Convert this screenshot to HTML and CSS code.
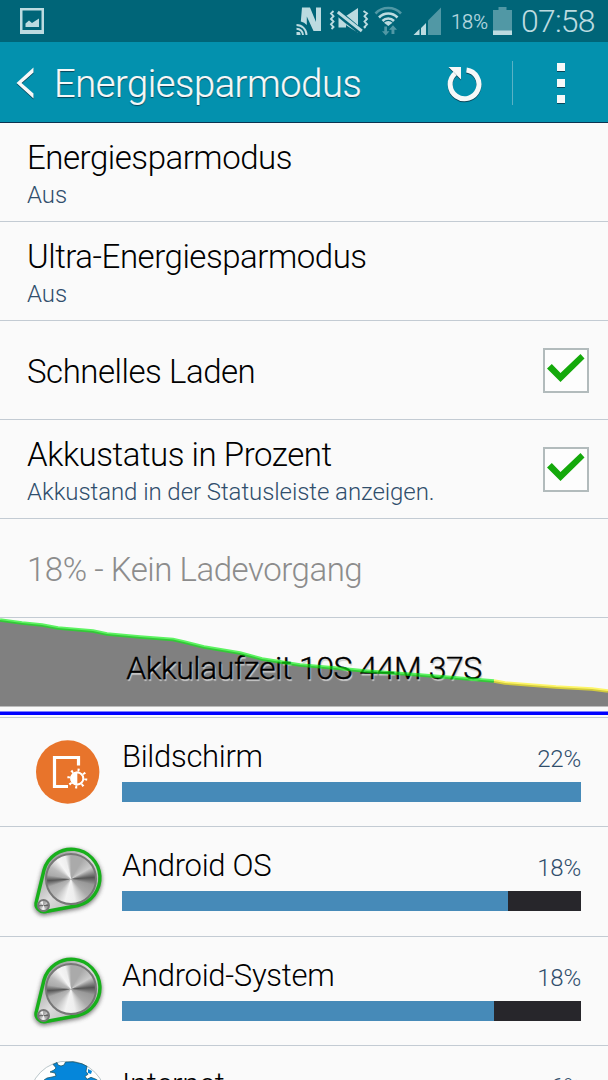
FILE: index.html
```html
<!DOCTYPE html>
<html lang="de">
<head>
<meta charset="utf-8">
<title>Energiesparmodus</title>
<link rel="stylesheet" href="styles.css">
</head>
<body>
<svg class="defs" width="0" height="0" aria-hidden="true">
  <defs>
    <linearGradient id="rim" x1="0" y1="0" x2="1" y2="1"><stop offset="0" stop-color="#777"/><stop offset=".5" stop-color="#ddd"/><stop offset="1" stop-color="#999"/></linearGradient>
    <filter id="soft" x="-20%" y="-20%" width="140%" height="140%"><feGaussianBlur stdDeviation="2"/></filter>
    <symbol id="gear" viewBox="0 0 80 80">
      <path d="M8.500 59L16 28A28.500 28.500 0 1 1 50 63.500L18 69.500A8 8 0 0 1 8.500 59z" fill="#444" stroke="#444" stroke-width="4" opacity=".7" filter="url(#soft)" transform="translate(0 1.500)"/>
      <path d="M8.500 59L16 28A28.500 28.500 0 1 1 50 63.500L18 69.500A8 8 0 0 1 8.500 59z" fill="url(#rim)" stroke="#17b01b" stroke-width="3.400"/>
    </symbol>
  </defs>
</svg>
<div class="screen">
  <header class="status">
    <svg class="shot" width="24" height="26" viewBox="0 0 24 26"><path d="M1.250 1.250H22.750V24H1.250Z" fill="none" stroke="#bcdbe0" stroke-width="2.500"/><path d="M0 22h24v4H0zM5.500 19v-3.500L9 12.500l3 2.500 7-4.500V19z" fill="#bcdbe0"/></svg>
    <svg class="tray" width="156" height="30" viewBox="296 6 156 30">
      <g fill="#bcdbe0">
        <path d="M302 7.500h8l6 14.500V7.500h5V31h-7.500L306.800 16.500V25a12 12 0 0 0-6-3.500z"/>
        <path d="M296.500 32h3a3 3 0 0 1 1 2.500v.5h-4z"/>
        <path d="M338.500 17h7.500v10.500h-7.500zM346 16l12-8v21z"/>
        <path d="M413.500 35l6-6v6zM421 28l5-5v12h-5z"/>
      </g>
      <g fill="none" stroke="#bcdbe0" stroke-width="1.900">
        <path d="M296.500 28.700a6.500 6.500 0 0 1 6.500 6.300M296.500 25a10 10 0 0 1 10 10"/>
        <path d="M333.500 11l-2.500 2.500 2.500 2.700-2.500 2.700 2.500 2.700-2.500 2.700 2.500 2.700-2 2M363.500 11l3.500 2.500-2.500 2.700 2.500 2.700-2.500 2.700 2.500 2.700-2.500 2.700 1 1"/>
      </g>
      <path d="M336.500 11.500l25 21" stroke="#006578" stroke-width="6.500"/>
      <path d="M337.800 12l24 19" stroke="#bcdbe0" stroke-width="3"/>
      <path d="M346.500 25.500L346 23.500l12 9.500v-.2z" fill="#bcdbe0"/>
      <g fill="none" stroke-width="2.600">
        <path d="M375.500 13.500a17.500 17.500 0 0 1 25.500 0" stroke="#5198a5"/>
        <path d="M379 17.500a12.800 12.800 0 0 1 18.500 0M382.500 21a8 8 0 0 1 11.500 0" stroke="#bcdbe0"/>
      </g>
      <path d="M384 22.700a6 6 0 0 1 8.500 0l-4.200 3.300z" fill="#bcdbe0"/>
      <path d="M384.300 26.500h2.700v4.700h2.500L385.700 35.500 382 31.200h2.300zM391.500 34v-4.200H389l4-4.600 4 4.600h-2.600V34z" fill="#5198a5"/>
      <path d="M428 35V20.500L441 7.500V35z" fill="#5198a5"/>
    </svg>
    <span class="battery-text">18%</span>
    <svg class="battery" width="19" height="28" viewBox="0 0 19 28"><path d="M0 3h5.500V0h8v3H19v25H0z" fill="#5198a5"/><path d="M0 23.500h19V28H0z" fill="#bcdbe0"/></svg>
    <span class="clock">07:58</span>
  </header>

  <nav class="bar">
    <svg class="back" width="18" height="32" viewBox="0 0 18 32"><path d="M17.500 .5v5L5.500 16l12 10.500v5L.5 16z" fill="#f6f8f8"/></svg>
    <h1 class="title">Energiesparmodus</h1>
    <svg class="reload" width="36" height="36" viewBox="0 0 36 36"><path d="M20.500 4A14.400 14.400 0 1 1 9 7.500" fill="none" stroke="#f6f8f8" stroke-width="5"/><path d="M2.500 1H15V13.500z" fill="#f6f8f8"/></svg>
    <span class="divider"></span>
    <span class="dots"><i></i><i></i><i></i></span>
  </nav>

  <main>
    <section class="row"><div><p class="label">Energiesparmodus</p><p class="sub">Aus</p></div></section>
    <section class="row"><div><p class="label">Ultra-Energiesparmodus</p><p class="sub">Aus</p></div></section>
    <section class="row"><p class="label">Schnelles Laden</p><span class="check"><svg width="38" height="30" viewBox="0 0 38 30"><path d="M0 15.500L4.800 11l8.700 9 20-19 4 4.500L13.500 29z" fill="#14a90b"/></svg></span></section>
    <section class="row"><div><p class="label">Akkustatus in Prozent</p><p class="sub">Akkustand in der Statusleiste anzeigen.</p></div><span class="check"><svg width="38" height="30" viewBox="0 0 38 30"><path d="M0 15.500L4.800 11l8.700 9 20-19 4 4.500L13.500 29z" fill="#14a90b"/></svg></span></section>
    <section class="row"><p class="label muted">18% - Kein Ladevorgang</p></section>

    <section class="chart">
      <svg class="plot" width="608" height="99" viewBox="0 618 608 99">
        <path d="M0 620L22 623 42 625 58 628 93 631 107 634 140 637 173 639.500 184 642 204 647 240 653 262 659 300 665 335 668 365 671 420 675 494 681 505 683 556 687 592 689 608 691V706.500H0z" fill="#808080"/>
        <path d="M0 713.300H608" stroke="#00f" stroke-width="3.400"/>
      </svg>
      <p class="runtime">Akkulaufzeit 10S 44M 37S</p>
      <svg class="plot trace" width="608" height="99" viewBox="0 618 608 99" fill="none" stroke-width="3.400">
        <path d="M0 620L22 623 42 625 58 628 93 631 107 634 140 637 173 639.500 184 642 204 647 240 653 262 659 300 665 335 668 365 671 420 675 494 681" stroke="#0bf012"/>
        <path d="M494 681L505 683 556 687 592 689 608 691" stroke="#fff31a"/>
      </svg>
    </section>

    <section class="usage">
      <svg class="icon screen-icon" width="80" height="80" viewBox="0 0 80 80"><circle cx="39.700" cy="38" r="31.700" fill="#e8742b"/><path d="M50.500 31.500V23.500H26.500v29H40" fill="none" stroke="#fff" stroke-width="3.200"/><circle cx="49.300" cy="44.500" r="8.500" fill="none" stroke="#fff" stroke-width="3" stroke-dasharray="2 4.676"/><circle cx="49.300" cy="44.500" r="6" fill="none" stroke="#fff" stroke-width="2"/><path d="M49.300 37.500a7 7 0 0 0 0 14z" fill="#fff"/></svg>
      <div class="info"><div class="line"><span class="name">Bildschirm</span><span class="pct">22%</span></div><div class="track"><div class="fill" style="width:100%"></div></div></div>
    </section>
    <section class="usage">
      <div class="icon knob"><svg width="80" height="80"><use href="#gear"/></svg><div class="disc"></div><div class="disc disc-small"></div></div>
      <div class="info"><div class="line"><span class="name">Android OS</span><span class="pct">18%</span></div><div class="track"><div class="fill" style="width:84.1%"></div></div></div>
    </section>
    <section class="usage">
      <div class="icon knob"><svg width="80" height="80"><use href="#gear"/></svg><div class="disc"></div><div class="disc disc-small"></div></div>
      <div class="info"><div class="line"><span class="name">Android-System</span><span class="pct">18%</span></div><div class="track"><div class="fill" style="width:81%"></div></div></div>
    </section>
    <section class="usage">
      <svg class="icon" width="80" height="80" viewBox="0 0 80 80"><circle cx="39.700" cy="38.500" r="38.500" fill="#fff" stroke="#a8b8bd" stroke-width=".8"/><path d="M25 3.500l4-2 1 2.500 3 1 3-1 1.500-3L45 .8l9 2 5 2.500-1 5 2 3-3 2 2 3 4-2 5 2 6 4V30H16V19l3-2 5-1 4-1-1-3-5-1 4-2 2-2-1.500-2z" fill="#0586da" stroke="#174e57" stroke-width=".7"/><path d="M60 8l4 2-1 3-3-1z" fill="#0586da"/></svg>
      <div class="info"><div class="line"><span class="name">Internet</span><span class="pct">6%</span></div><div class="track"><div class="fill" style="width:30%"></div></div></div>
    </section>
  </main>
</div>
</body>
</html>
```
FILE: styles.css
```css
* { box-sizing: border-box; }
body, p, h1 { margin: 0; }
body { background: #fafafa; font-family: Roboto, sans-serif; font-weight: 300; overflow: hidden; }
.defs { position: absolute; }
.screen { width: 608px; height: 1080px; overflow: hidden; background: #fafafa; }
svg { display: block; flex: none; }

.status { height: 42px; background: #006578; color: #bcdbe0; display: flex; align-items: flex-start; padding: 0 0 0 20px; white-space: nowrap; }
.shot { margin-top: 8px; }
.tray { margin: 6px -1px 0 252px; }
.battery-text { font-size: 20px; line-height: 24px; margin-top: 10px; width: 37px; -webkit-text-stroke: .2px #bcdbe0; }
.battery { margin: 7px 0 0 5px; }
.clock { font-size: 32px; line-height: 38px; margin: 2px 0 0 9px; letter-spacing: -.8px; }

.bar { height: 81px; background: #0391ae; border-bottom: 1px solid #0c3350; display: flex; align-items: flex-start; }
.back { margin: 25px 0 0 16px; filter: drop-shadow(0 1px 0 #07465a); }
.title { font-size: 38px; line-height: 44px; font-weight: 300; letter-spacing: -.4px; color: #f6f8f8; margin: 20px 0 0 20px; width: 392px; text-shadow: 0 1px 1px #07465a; -webkit-text-stroke: .2px #f6f8f8; }
.reload { margin: 24px 0 0 0; filter: drop-shadow(0 1px 0 #07465a); }
.divider { width: 1px; height: 44px; background: #5ab2c5; margin: 19px 0 0 30px; }
.dots { display: flex; flex-direction: column; gap: 8px; margin: 21px 0 0 44px; }
.dots i { width: 8px; height: 8px; background: #f6f8f8; box-shadow: 0 1px 0 #07465a; }

.row { height: 99px; border-bottom: 1px solid #c3cbd3; display: flex; align-items: center; justify-content: space-between; padding: 0 19px 0 27px; }
.label { font-size: 33px; letter-spacing: -.46px; line-height: 40px; color: #000; white-space: nowrap; padding-top: 4px; }
.sub { font-size: 24px; letter-spacing: -.07px; line-height: 32px; color: #304e6c; white-space: nowrap; padding-top: 1px; }
.muted { color: #8c8c8c; }
.check { width: 46px; height: 45px; border: 2px solid #b2bbbc; background: #fdfdfd; display: flex; padding: 3px 0 0 2px; }

.chart { height: 100px; border-bottom: 1px solid #c3cbd3; position: relative; }
.plot { position: absolute; left: 0; top: 0; }
.trace { opacity: .65; }
.runtime { position: relative; font-size: 32px; letter-spacing: -.45px; line-height: 40px; padding-top: 30px; text-align: center; white-space: nowrap; color: #000; -webkit-text-stroke: .4px #000; text-shadow: 1px 2px 1px #ccc; }

.usage { height: 109.300px; border-bottom: 1px solid #c3cbd3; display: flex; padding: 0 27px 0 28px; }
.icon { margin-top: 15px; }
.screen-icon { margin-top: 16px; }
.info { flex: 1; margin-left: 14px; }
.line { display: flex; justify-content: space-between; height: 64px; }
.name { font-size: 31px; letter-spacing: -.3px; line-height: 40px; margin-top: 19px; color: #000; white-space: nowrap; }
.pct { font-size: 24px; letter-spacing: -.2px; line-height: 32px; margin-top: 25px; color: #304e6c; }
.track { height: 20px; background: #27262b; }
.fill { height: 20px; background: #468ab8; }
.knob { position: relative; }
.disc { position: absolute; left: 17px; top: 11px; width: 52px; height: 52px; border-radius: 50%; border: 2px solid #777; background: conic-gradient(#aaa, #aaa 30deg, #ccc 60deg, #555 86deg, #999 105deg, #aaa 135deg, #eee 170deg, #f2f2f2 195deg, #bbb 225deg, #aaa 250deg, #555 266deg, #aaa 280deg, #bbb 300deg, #f5f5f5 325deg, #eee 345deg, #aaa); }
.disc-small { left: 9px; top: 57px; width: 13px; height: 13px; }
```
